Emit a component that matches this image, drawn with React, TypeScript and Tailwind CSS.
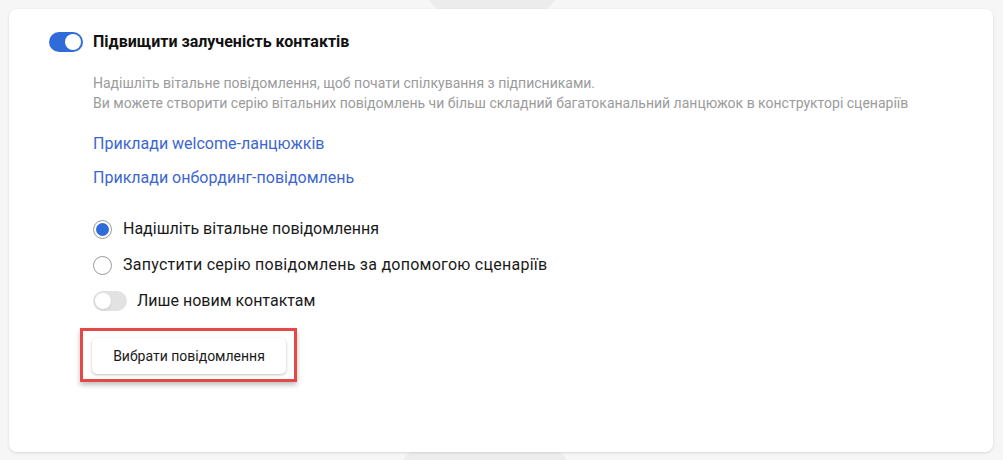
import { useState } from 'react';

const FONT = { fontFamily: 'Roboto, "Noto Sans", sans-serif' };

function Toggle({ on }: { on: boolean }) {
  return (
    <span
      className={`relative inline-flex h-5 w-[34px] shrink-0 items-center rounded-full
        ${on ? 'bg-[#2f6bd9]' : 'bg-[#e2e2e2]'}`}
    >
      <span
        className={`absolute top-[2px] h-4 w-4 rounded-full bg-white
          ${on ? 'right-[2px]' : 'left-[2px] shadow-[0_1px_2px_rgba(0,0,0,0.12)]'}`}
      />
    </span>
  );
}

function Radio({ checked }: { checked: boolean }) {
  return (
    <span className="flex h-[19px] w-[19px] shrink-0 items-center justify-center rounded-full border border-[#9a9a9a] bg-white">
      {checked && <span className="h-[13px] w-[13px] rounded-full bg-[#2f6bd9]" />}
    </span>
  );
}

export default function App() {
  const [mode, setMode] = useState<'welcome' | 'series'>('welcome');

  return (
    <div className="relative h-[460px] w-[1003px] overflow-hidden bg-[#f6f6f6]" style={FONT}>
      {/* faint shapes behind the card */}
      <div className="absolute left-[426px] top-[-12px] h-[24px] w-[132px] rounded-b-[40px] bg-[#ececec]" />
      <div className="absolute left-[400px] top-[448px] h-[24px] w-[170px] rounded-t-[30px] bg-[#ededed]" />

      <div className="relative ml-[9px] mt-[9px] h-[443px] w-[984px] rounded-lg bg-white shadow-[0_1px_3px_rgba(0,0,0,0.12)]">
        <div className="pl-[40px] pt-[21px]">
          {/* Header */}
          <div className="flex items-center gap-[10px]">
            <Toggle on />
            <span className="text-[16px] font-bold text-[#111]">Підвищити залученість контактів</span>
          </div>

          <div className="pl-[44px]">
            {/* Description */}
            <p className="mt-[19px] text-[14px] leading-[20px] text-[#9b9b9b]">
              Надішліть вітальне повідомлення, щоб почати спілкування з підписниками.
              <br />
              Ви можете створити серію вітальних повідомлень чи більш складний багатоканальний ланцюжок в конструкторі сценаріїв
            </p>

            {/* Links */}
            <div className="mt-[21px] flex flex-col gap-[14px] text-[16px] leading-[20px] text-[#3d66cf]">
              <a href="#">Приклади welcome-ланцюжків</a>
              <a href="#">Приклади онбординг-повідомлень</a>
            </div>

            {/* Options */}
            <div className="mt-[31px] flex flex-col gap-[16px] text-[16px] leading-[20px] text-[#1a1a1a]">
              <label className="flex items-center gap-[11px]" onClick={() => setMode('welcome')}>
                <Radio checked={mode === 'welcome'} />
                <span>Надішліть вітальне повідомлення</span>
              </label>
              <label className="flex items-center gap-[11px]" onClick={() => setMode('series')}>
                <Radio checked={mode === 'series'} />
                <span className="tracking-[0.26px]">Запустити серію повідомлень за допомогою сценаріїв</span>
              </label>
              <label className="flex items-center gap-[10px]">
                <Toggle on={false} />
                <span>Лише новим контактам</span>
              </label>
            </div>
          </div>

          {/* Action */}
          <div className="ml-[31px] mt-[17px] w-fit border-[3px] border-[#e54848] pb-[5px] pl-[9px] pr-[8px] pt-[7px] shadow-[0_3px_5px_rgba(0,0,0,0.25)]">
            <button className="block h-[36px] w-[194px] rounded-[5px] bg-white text-[14px] text-[#1a1a1a] shadow-[0_1px_3px_rgba(0,0,0,0.25)]">
              Вибрати повідомлення
            </button>
          </div>
        </div>
      </div>
    </div>
  );
}
